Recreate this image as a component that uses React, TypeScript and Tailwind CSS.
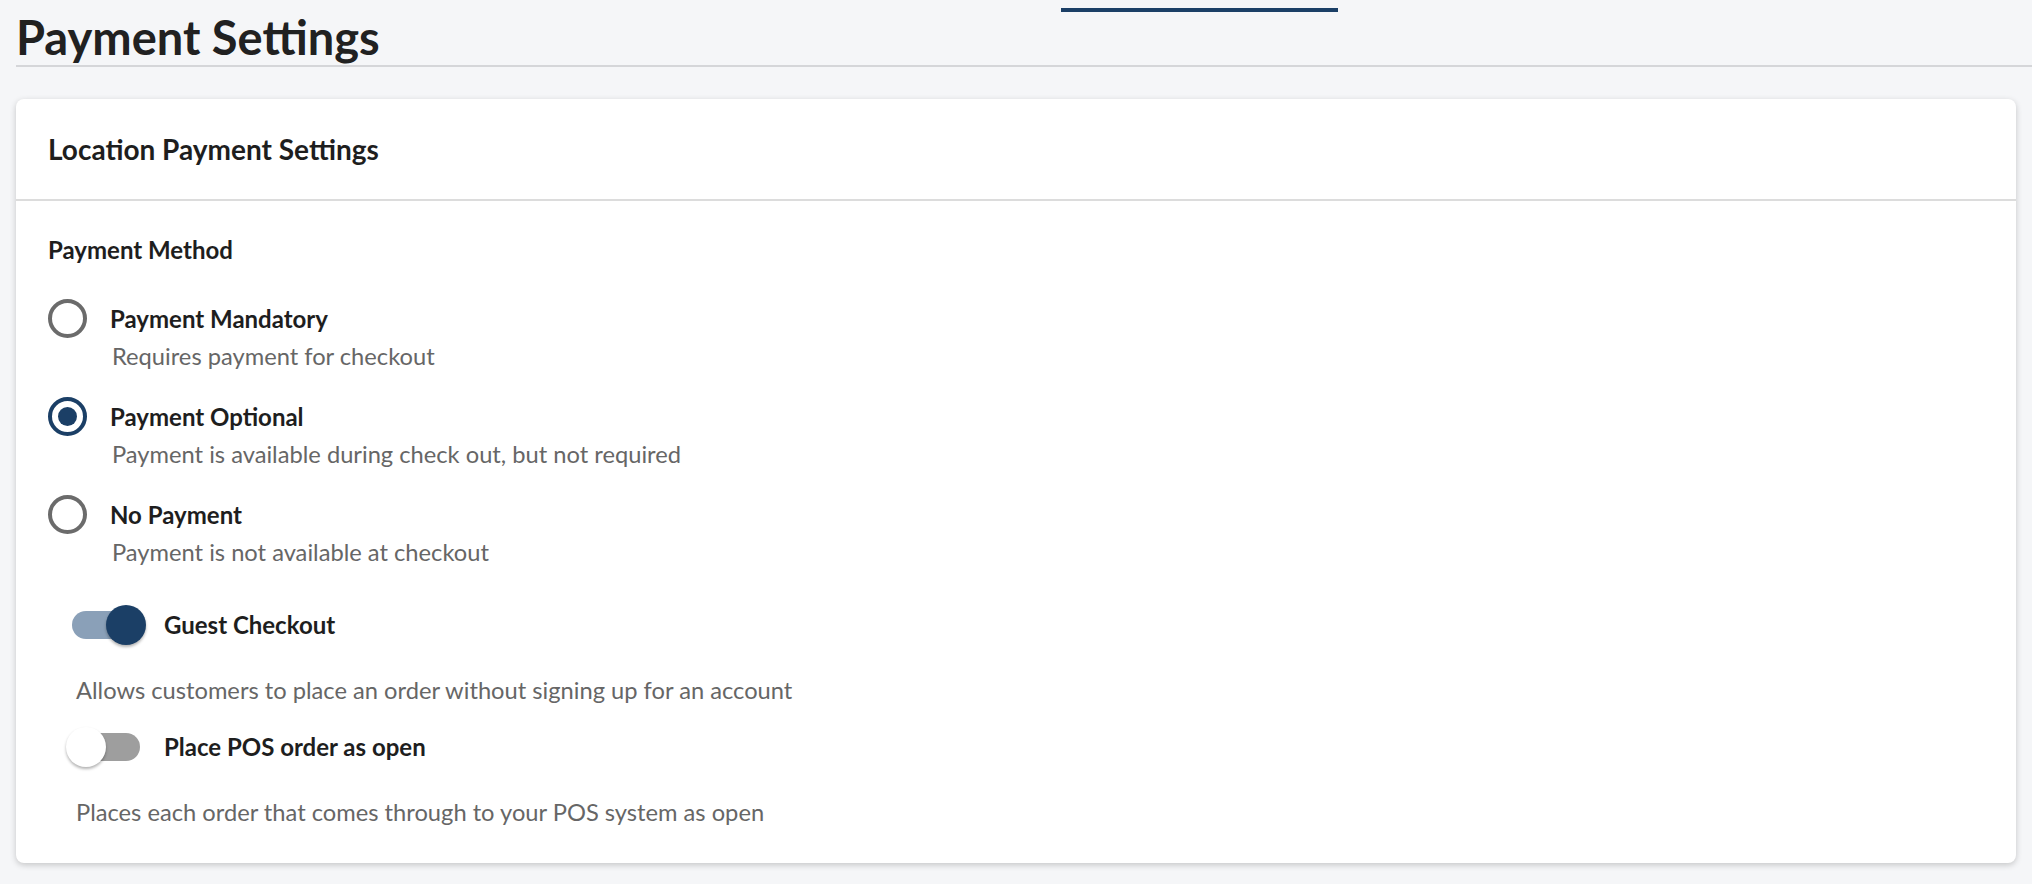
import { useState } from "react";

type PaymentMode = "mandatory" | "optional" | "none";

const paymentOptions: { value: PaymentMode; label: string; description: string }[] = [
  { value: "mandatory", label: "Payment Mandatory", description: "Requires payment for checkout" },
  { value: "optional", label: "Payment Optional", description: "Payment is available during check out, but not required" },
  { value: "none", label: "No Payment", description: "Payment is not available at checkout" }
];

function RadioDot({ checked }: { checked: boolean }) {
  return (
    <span
      className={
        checked
          ? "flex h-[39px] w-[39px] shrink-0 items-center justify-center rounded-full border-[4px] border-[#1b3f66]"
          : "flex h-[39px] w-[39px] shrink-0 items-center justify-center rounded-full border-[4px] border-[#6b6b6b]"
      }
    >
      {checked ? <span className="h-[19px] w-[19px] rounded-full bg-[#1b3f66]" /> : null}
    </span>
  );
}

function Toggle({ on, onClick }: { on: boolean; onClick: () => void }) {
  return (
    <button type="button" onClick={onClick} className="relative h-[40px] w-[80px] shrink-0">
      <span
        className={
          on
            ? "absolute left-[6px] right-[6px] top-[6px] h-[28px] rounded-full bg-[#8aa0b8]"
            : "absolute left-[6px] right-[6px] top-[6px] h-[28px] rounded-full bg-[#9e9e9e]"
        }
      />
      <span
        className={
          on
            ? "absolute right-0 top-0 h-[40px] w-[40px] rounded-full bg-[#1b3f66] shadow-[0_2px_3px_rgba(0,0,0,0.3)]"
            : "absolute left-0 top-0 h-[40px] w-[40px] rounded-full bg-white shadow-[0_2px_3px_rgba(0,0,0,0.3)]"
        }
      />
    </button>
  );
}

export default function App() {
  const [mode, setMode] = useState<PaymentMode>("optional");
  const [guestCheckout, setGuestCheckout] = useState(true);
  const [posOpen, setPosOpen] = useState(false);

  return (
    <div className="relative min-h-[884px] bg-[#f5f6f8] pb-4 font-['Lato','Noto_Sans',sans-serif] text-[#1e1e1e]">
      {/* tab indicator */}
      <div className="absolute left-[1061px] top-[8px] h-[4px] w-[277px] bg-[#1b3f66]" />

      <h1 className="ml-4 border-b-2 border-[#d5d6d9] pt-[9px] text-[47px] font-bold leading-[56px] text-[#212121]">
        Payment Settings
      </h1>

      <section className="mx-4 mt-8 rounded-lg bg-white shadow-[0_2px_6px_rgba(0,0,0,0.2)]">
        <header className="flex h-[102px] items-center border-b-2 border-[#dcdcdc] px-8">
          <h2 className="text-[28px] font-bold leading-[34px] text-[#1e1e1e]">Location Payment Settings</h2>
        </header>

        <div className="px-8 pb-[36px] pt-[35px]">
          <p className="text-[24px] font-bold leading-[28px]">Payment Method</p>

          <div className="mt-[35px]">
            {paymentOptions.map((option) => (
              <div key={option.value} className="h-[98px]">
                <button type="button" onClick={() => setMode(option.value)} className="flex h-[39px] items-center gap-[23px]">
                  <RadioDot checked={mode === option.value} />
                  <span className="text-[24px] font-bold leading-[39px]">{option.label}</span>
                </button>
                <p className="ml-16 mt-[3px] text-[23.7px] leading-[30px] text-[#666666]">{option.description}</p>
              </div>
            ))}
          </div>

          <div className="ml-[18px] mt-[12px] flex h-[40px] items-center gap-[18px]">
            <Toggle on={guestCheckout} onClick={() => setGuestCheckout(!guestCheckout)} />
            <span className="text-[24px] font-bold leading-[40px]">Guest Checkout</span>
          </div>
          <p className="ml-[28px] mt-[30px] text-[23.7px] leading-[30px] text-[#666666]">
            Allows customers to place an order without signing up for an account
          </p>

          <div className="ml-[18px] mt-[22px] flex h-[40px] items-center gap-[18px]">
            <Toggle on={posOpen} onClick={() => setPosOpen(!posOpen)} />
            <span className="text-[24px] font-bold leading-[40px]">Place POS order as open</span>
          </div>
          <p className="ml-[28px] mt-[30px] text-[23.7px] leading-[30px] text-[#666666]">
            Places each order that comes through to your POS system as open
          </p>
        </div>
      </section>
    </div>
  );
}
